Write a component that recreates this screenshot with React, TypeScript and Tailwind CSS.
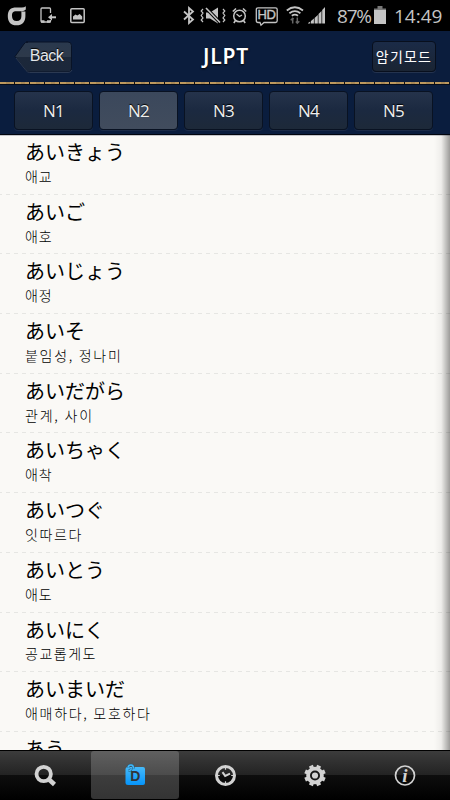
import React from 'react'

interface Word {
  kana: string
  meaning: string
  spacing?: string
}

const WORDS: Word[] = [
  { kana: 'あいきょう', meaning: '애교' },
  { kana: 'あいご', meaning: '애호' },
  { kana: 'あいじょう', meaning: '애정' },
  { kana: 'あいそ', meaning: '붙임성, 정나미', spacing: 'tracking-[1.7px]' },
  { kana: 'あいだがら', meaning: '관계, 사이', spacing: 'tracking-[1.8px]' },
  { kana: 'あいちゃく', meaning: '애착' },
  { kana: 'あいつぐ', meaning: '잇따르다', spacing: 'tracking-[1.6px]' },
  { kana: 'あいとう', meaning: '애도' },
  { kana: 'あいにく', meaning: '공교롭게도', spacing: 'tracking-[1.5px]' },
  { kana: 'あいまいだ', meaning: '애매하다, 모호하다', spacing: 'tracking-[1.7px]' },
  { kana: 'あう', meaning: '' },
]

const LEVELS = ['N1', 'N2', 'N3', 'N4', 'N5']
const ACTIVE_LEVEL = 'N2'

const StatusBar: React.FC = () => (
  <div className="flex h-[31px] shrink-0 items-center bg-black text-[#c4c4c4]">
    {/* Carrier logo */}
    <svg className="ml-[7px] shrink-0" width="20" height="31" viewBox="0 0 20 31" fill="none">
      <path d="M18.800 6.200V9.500q-1.500 1.700-4 1.700H9.500C5.500 11.200 5 13 5 16s1.500 5 4.700 5 4.700-1.800 4.700-5v-4.500h4V16c0 6-3.200 9.300-8.900 9.300S.8 22 .8 16 3.500 7.500 9.500 7.500h5.300q2.500 0 4-1.300z" fill="currentColor" />
    </svg>
    {/* Phone transfer */}
    <svg className="ml-[13px] shrink-0" width="17" height="31" viewBox="0 0 17 31" fill="none" stroke="currentColor">
      <path d="M10.500 13V9q0-1-1-1H2q-1 0-1 1v12q0 1 1 1h7.500q1 0 1-1v-1" strokeWidth="1.300" />
      <path d="M1 21.500h3.500M7 21.500h3.500" strokeWidth="2.400" />
      <path d="M16 17.300H10" strokeWidth="2" />
      <path d="M8 17.300l4-3.300v6.600z" fill="currentColor" stroke="none" />
    </svg>
    {/* Gallery */}
    <svg className="ml-[13px] shrink-0" width="15" height="31" viewBox="0 0 15 31">
      <rect x=".8" y="8.800" width="13.400" height="13.800" rx="1" fill="none" stroke="currentColor" strokeWidth="1.500" />
      <path d="M3 19.500v-3l2.500-2 1.800 1 2.400-1.500 2.500 2.500v3z" fill="currentColor" />
    </svg>
    {/* Bluetooth */}
    <svg className="ml-[98px] shrink-0" width="13" height="31" viewBox="0 0 13 31" fill="none">
      <path d="M1 11.500l9 8-4 3.500V8l4 3.500-9 8" stroke="currentColor" strokeWidth="1.800" />
    </svg>
    {/* Vibrate and muted */}
    <svg className="ml-[4px] shrink-0" width="26" height="31" viewBox="0 0 26 31" fill="none" stroke="currentColor">
      <path d="M3 9L1.200 11 3 13 1.200 15.500 3 18 1.200 20 3 22M23 9l1.800 2L23 13l1.800 2.500L23 18l1.800 2L23 22" strokeWidth="1.200" />
      <path d="M6 12.500h4l8-5v16l-8-5H6z" fill="currentColor" stroke="none" />
      <path d="M6 8l14 14.500" stroke="#000" strokeWidth="3.400" />
      <path d="M6 8l14 14.500" strokeWidth="1.600" />
    </svg>
    {/* Alarm */}
    <svg className="ml-[6px] shrink-0" width="15" height="31" viewBox="0 0 15 31" fill="none" stroke="currentColor">
      <circle cx="7.500" cy="16" r="5.800" strokeWidth="1.500" />
      <path d="M.8 11.500L4 8.500M14.200 11.500L11 8.500M3.500 20.500L1.800 23M11.500 20.500l1.700 2.500" strokeWidth="1.600" />
      <path d="M4.500 14l3 2.500 2.500-1.500" strokeWidth="1.300" />
    </svg>
    {/* HD voice */}
    <span className="relative ml-[8px] flex h-[31px] w-[24px] shrink-0 justify-center pt-[6px]">
      <svg className="absolute inset-0" width="24" height="31" viewBox="0 0 24 31" fill="none">
        <path d="M3 7.800h17.500q1.700 0 1.700 1.700v11.300q0 1.700-1.700 1.700H9l-3 2.700-1-2.700H3q-1.700 0-1.700-1.700V9.500Q1.300 7.800 3 7.800z" stroke="currentColor" strokeWidth="1.300" />
      </svg>
      <span className="mr-[1px] font-['Liberation_Sans'] text-[13px] leading-[18px] tracking-[-0.4px] [-webkit-text-stroke:0.4px_#c4c4c4]">HD</span>
    </span>
    {/* Wifi */}
    <svg className="ml-[7px] shrink-0" width="18" height="31" viewBox="0 0 18 31" fill="none" stroke="currentColor">
      <path d="M.8 10.500q8-6.500 16.200 0M3.400 13.300q5.500-4.200 11 0M5.800 15.700q3.100-2.200 6.200 0" strokeWidth="1.800" />
      <path d="M6.700 23.500v-5M4.700 20.200l2-2 1 1M11.300 17.500v5.500M9.800 21.500l1.500 1.700 2-2" stroke="#666" strokeWidth="1.500" />
    </svg>
    {/* Signal */}
    <svg className="ml-[4px] shrink-0" width="18" height="31" viewBox="0 0 18 31" fill="currentColor">
      <path d="M0 23.500h2.300V21.500L0 23zM3 23.500h2.900v-5L3 21zM6.600 23.500h3.200V15l-3.200 3zM10.500 23.500h3V11l-3 3zM14.200 23.500h2.800V7l-2.800 3z" />
    </svg>
    <span className="ml-[11px] w-[37px] shrink-0 pt-[1px] font-['Open_Sans'] text-[19px] leading-[31px] tracking-[-1.2px]">87%</span>
    {/* Battery */}
    <svg className="shrink-0" width="12" height="31" viewBox="0 0 12 31">
      <path d="M3.500 6h5v3h-5z" fill="#777" />
      <path d="M0 8.500h12V10H0z" fill="#777" />
      <path d="M0 10h12v14H0z" fill="currentColor" />
    </svg>
    <span className="ml-[8px] shrink-0 pt-[1px] font-['Open_Sans'] text-[19px] leading-[31px]">14:49</span>
  </div>
)

const Header: React.FC = () => (
  <div className="flex h-[51px] shrink-0 items-center justify-between bg-[#0b1d3d] pr-[14px] pl-[14px]">
    <button className="relative h-8 w-[59px]">
      <svg className="absolute inset-0" width="59" height="32" viewBox="0 0 59 32">
        <defs>
          <linearGradient id="back" x1="0" y1="0" x2="0" y2="1">
            <stop offset="0" stopColor="#2a394e" />
            <stop offset=".5" stopColor="#2d394a" />
            <stop offset=".5" stopColor="#1c283a" />
            <stop offset="1" stopColor="#1b273a" />
          </linearGradient>
        </defs>
        <path d="M12 1h42q3.500 0 3.500 3.500v23q0 3.500-3.500 3.500H15q-2 0-3.500-2L1 15.500 10 3q1-2 4-2z" fill="url(#back)" stroke="#091326" />
        <path d="M2 17l10 12.500q1.500 2 3.500 2H54q3 0 4-2.500" fill="none" stroke="#35435b" strokeWidth=".8" />
      </svg>
      <span className="relative top-[-1px] ml-[6px] font-['Liberation_Sans'] text-[16px] leading-[31px] tracking-[-0.5px] text-[#e4e6e9] [text-shadow:0_-1px_1px_#000]">Back</span>
    </button>
    <h1 className="pl-[7px] font-['Noto_Sans'] text-[21px] leading-[53px] font-semibold tracking-[0.8px] text-white [text-shadow:0_1px_2px_#000]">JLPT</h1>
    <button className="h-[31px] w-[64px] rounded-[4px] border border-[#080f1d] bg-linear-to-b from-[#1b2b47] to-[#1a2433] font-['Noto_Sans_CJK_KR',sans-serif] text-[14px] leading-[27px] tracking-[1.2px] whitespace-nowrap text-white shadow-[0_1px_0_#24334e]">
      암기모드
    </button>
  </div>
)

const LevelTabs: React.FC = () => (
  <div className="flex h-[53px] shrink-0 flex-col border-b border-[#01050e] bg-[#0a1d3e]">
    {/* Stitching */}
    <svg className="shrink-0" width="450" height="3" viewBox="0 0 450 3">
      <path d="M0 1h450" stroke="#bd995e" strokeWidth="2" />
      <path d="M0 1h450" stroke="#94794f" strokeWidth="1" strokeDasharray="4 11" strokeDashoffset="-6" />
      <path d="M0 1h450" stroke="#111" strokeWidth="2" strokeDasharray="1 14" strokeDashoffset="-14" />
      <path d="M0 2.500h450" stroke="#050b18" />
    </svg>
    <div className="flex gap-[6px] px-[14px] pt-[6px]">
      {LEVELS.map((level) => (
        <button
          key={level}
          className={`h-[39px] w-[79px] rounded-[4px] border border-[#091222] font-['Open_Sans'] text-[17px] leading-[37px] tracking-[-0.7px] text-[#eee] shadow-[0_1px_0_#1b2b48] [text-shadow:0_-1px_1px_#000] ${
            level === ACTIVE_LEVEL
              ? 'bg-linear-to-b from-[#3b485c] to-[#414c5d]'
              : 'bg-linear-to-b from-[#25334b] via-[#1b2940] to-[#1d2939]'
          }`}
        >
          {level}
        </button>
      ))}
    </div>
  </div>
)

const WordRow: React.FC<{ word: Word }> = ({ word }) => (
  <li className="flex h-[59.7px] shrink-0 flex-col pl-[25px]">
    <p className="h-[33px] pt-[2px] font-['Noto_Sans_CJK_JP',sans-serif] text-[20px] leading-[30px] text-black">{word.kana}</p>
    <p className={`h-[26px] font-['Noto_Sans_CJK_KR',sans-serif] text-[14px] leading-[17px] font-light text-black ${word.spacing ?? 'tracking-[0.9px]'}`}>
      {word.meaning}
    </p>
    <svg className="-ml-[25px] shrink-0" width="450" height="1" viewBox="0 0 450 1">
      <path d="M0 .5h450" stroke="#e6e6e3" strokeDasharray="4 4" strokeDashoffset="2" />
    </svg>
  </li>
)

const TabBar: React.FC = () => (
  <nav className="grid h-[50px] shrink-0 grid-cols-5 border-t border-black bg-[linear-gradient(to_bottom,#3c3c3c_0,#222_50%,#0d0d0d_50%,#000_100%)] text-[#d2d2d2]">
    <div className="flex items-center justify-center">
      <svg width="24" height="24" viewBox="0 0 24 24" fill="none" stroke="currentColor">
        <circle cx="10.700" cy="10" r="7.200" strokeWidth="3.800" />
        <path d="M15.500 15l6 5.500" strokeWidth="4.500" />
      </svg>
    </div>
    <div className="mx-[1px] mb-[1px] flex items-center justify-center rounded-[3px] bg-[linear-gradient(to_bottom,#606060_0,#4c4c4c_50%,#3d3d3d_50%,#343434_100%)]">
      <svg width="24" height="24" viewBox="0 0 24 24">
        <defs>
          <linearGradient id="book" x1="0" y1="0" x2="0" y2="1">
            <stop offset="0" stopColor="#46b9f8" />
            <stop offset="1" stopColor="#0695fb" />
          </linearGradient>
        </defs>
        <path d="M5 4h15q2 0 2 2v14q0 2-2 2H5q-2.500 0-2.500-2V6q0-2 2.500-2z" fill="url(#book)" />
        <path d="M5.500 7.500q2.800 0 2.800-2.300M5 4.500q.5-2.500 3-2.500t2.500 3.500" fill="none" stroke="#255b7b" strokeWidth="2.600" />
        <path d="M5.500 7.500q2.800 0 2.800-2.300M5 4.500q.5-2.500 3-2.500t2.500 3.500" fill="none" stroke="#44b6f5" strokeWidth="1.500" />
        <text x="12.400" y="17.500" textAnchor="middle" fontFamily="Liberation Sans" fontSize="14" fontWeight="bold" fill="#303438">D</text>
      </svg>
    </div>
    <div className="flex items-center justify-center">
      <svg width="24" height="24" viewBox="0 0 24 24" fill="none" stroke="currentColor">
        <circle cx="12.500" cy="11.500" r="9" strokeWidth="3" />
        <path d="M9.500 8.200l2.700 3.700L17 9.700" strokeWidth="2" />
        <path d="M12.500 4v1.800M12.500 17.200V19M5 11.500h1.800M18.200 11.500H20" strokeWidth="1.200" />
      </svg>
    </div>
    <div className="flex items-center justify-center">
      <svg width="24" height="24" viewBox="0 0 24 24" fill="none" stroke="currentColor">
        {/* Gear teeth, four bars through the hub */}
        <g transform="rotate(22.5 12 11.500)">
          <path d="M12 .8v21.400M1.300 11.500h21.400M4.430 3.930l15.140 15.140M19.570 3.930L4.430 19.070" strokeWidth="4.200" strokeLinejoin="round" />
        </g>
        <circle cx="12" cy="11.500" r="6.700" strokeWidth="4.200" />
        <circle cx="12" cy="11.500" r="5" fill="#171717" stroke="none" />
        <circle cx="12" cy="11.500" r="3.100" fill="currentColor" stroke="none" />
      </svg>
    </div>
    <div className="flex items-center justify-center">
      <svg width="24" height="24" viewBox="0 0 24 24" fill="none" stroke="currentColor">
        <circle cx="12" cy="11.500" r="9.500" strokeWidth="1.700" />
        <text x="11.800" y="17.500" textAnchor="middle" fontFamily="Liberation Serif" fontSize="19" fontWeight="bold" fontStyle="italic" fill="currentColor" stroke="none">i</text>
      </svg>
    </div>
  </nav>
)

export default function App() {
  return (
    <div className="flex h-[800px] w-[450px] flex-col overflow-hidden bg-black">
      <StatusBar />
      <Header />
      <LevelTabs />
      <main className="relative min-h-0 flex-1 overflow-hidden bg-[#faf9f6] shadow-[inset_0_1px_0_#c5c6ca]">
        <ul className="flex flex-col">
          {WORDS.map((word) => (
            <WordRow key={word.kana} word={word} />
          ))}
        </ul>
        {/* Page edge shade */}
        <div className="absolute inset-y-0 right-0 w-[16px] bg-[linear-gradient(to_right,transparent,#0000000c_45%,#00000060)]" />
      </main>
      <TabBar />
    </div>
  )
}
